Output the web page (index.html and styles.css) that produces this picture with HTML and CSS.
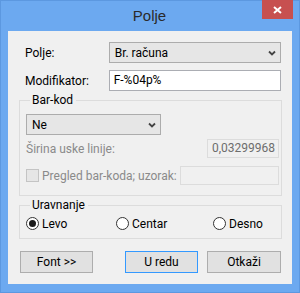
FILE: index.html
```html
<!DOCTYPE html>
<html lang="sr">
<head>
    <meta charset="UTF-8">
    <meta name="viewport" content="width=device-width, initial-scale=1.0">
    <title>Polje</title>
    <link rel="stylesheet" href="styles.css">
</head>
<body>
    <div class="window">
        <div class="titlebar">
            <span></span>
            <span class="title">Polje</span>
            <span class="close-btn">
                <svg width="9" height="8" viewBox="0 0 9 8">
                    <path d="M1 1 L8 7 M8 1 L1 7" stroke="#fff" stroke-width="2" fill="none"/>
                </svg>
            </span>
        </div>

        <div class="client">
            <div class="form-row">
                <label class="form-label">Polje:</label>
                <div class="combo combo-wide">
                    <span>Br. računa</span>
                    <svg class="chevron" width="8" height="6" viewBox="0 0 8 6">
                        <path d="M1 1.5 L4 4.5 L7 1.5" stroke="#444" stroke-width="1.8" fill="none"/>
                    </svg>
                </div>
            </div>
            <div class="form-row row-second">
                <label class="form-label">Modifikator:</label>
                <div class="textbox textbox-wide">F-%04p%</div>
            </div>

            <fieldset class="group group-barcode">
                <legend>Bar-kod</legend>
                <div class="combo combo-short">
                    <span>Ne</span>
                    <svg class="chevron" width="8" height="6" viewBox="0 0 8 6">
                        <path d="M1 1.5 L4 4.5 L7 1.5" stroke="#444" stroke-width="1.8" fill="none"/>
                    </svg>
                </div>
                <div class="group-row row-width">
                    <span class="muted">Širina uske linije:</span>
                    <div class="textbox textbox-disabled textbox-num">0,03299968</div>
                </div>
                <div class="group-row row-preview">
                    <span class="checkbox"></span>
                    <span class="muted">Pregled bar-koda; uzorak:</span>
                    <div class="textbox textbox-disabled textbox-sample"></div>
                </div>
            </fieldset>

            <fieldset class="group group-align">
                <legend>Uravnanje</legend>
                <div class="radios">
                    <span class="radio-item radio-left"><span class="radio checked"></span>Levo</span>
                    <span class="radio-item radio-center"><span class="radio"></span>Centar</span>
                    <span class="radio-item"><span class="radio"></span>Desno</span>
                </div>
            </fieldset>

            <div class="buttons">
                <button class="btn btn-font">Font &gt;&gt;</button>
                <button class="btn btn-default">U redu</button>
                <button class="btn btn-cancel">Otkaži</button>
            </div>
        </div>
    </div>
</body>
</html>
```

FILE: styles.css
```css
* {
    margin: 0;
    padding: 0;
    box-sizing: border-box;
}

body {
    font-family: Roboto, "Liberation Sans", sans-serif;
    font-size: 12px;
    color: #000;
    width: 300px;
    height: 293px;
    overflow: hidden;
}

.window {
    width: 300px;
    height: 293px;
    background: #6ca9f0;
    border: 1px solid #5c98e0;
    padding: 0 7px 8px 7px;
    display: flex;
    flex-direction: column;
}

.titlebar {
    height: 30px;
    display: grid;
    grid-template-columns: 1fr auto 1fr;
    margin-right: -1px;
}

.title {
    font-family: "Liberation Sans", sans-serif;
    font-weight: 400;
    font-size: 15px;
    color: #2a2a2a;
    line-height: 30px;
    padding-right: 2px;
}

.close-btn {
    justify-self: end;
    width: 31px;
    height: 19px;
    margin-top: -1px;
    background: #c75050;
    display: flex;
    align-items: center;
    justify-content: center;
}

.client {
    flex: 1;
    background: #f0f0f0;
    padding: 11px 11px 0 11px;
    display: flex;
    flex-direction: column;
    white-space: nowrap;
}

.form-row {
    display: flex;
    align-items: center;
    height: 21px;
}

.row-second {
    margin-top: 7px;
}

.form-label {
    width: 90px;
    padding-left: 6px;
}

.combo {
    height: 21px;
    background: #e6e6e6;
    border: 1px solid #acacac;
    display: flex;
    align-items: center;
    justify-content: space-between;
    padding: 0 4px 0 5px;
}

.combo-wide {
    width: 173px;
}

.combo-short {
    width: 135px;
}

.chevron {
    display: block;
}

.textbox {
    height: 21px;
    background: #fff;
    border: 1px solid #abadb3;
    padding: 0 4px;
    line-height: 19px;
}

.textbox-wide {
    width: 173px;
}

.textbox-disabled {
    height: 19px;
    line-height: 17px;
    background: #f0f0f0;
    border: 1px solid #dcdcdc;
    color: #6d6d6d;
}

.textbox-num {
    width: 72px;
    margin-left: auto;
}

.textbox-sample {
    width: 99px;
    margin-left: auto;
}

.group {
    border: 1px solid #dcdcdc;
    width: 263px;
    padding: 0 2px 0 6px;
}

.group legend {
    margin-left: 4px;
    padding: 0 3px 0 2px;
    line-height: 15px;
}

.group-barcode {
    margin-top: 2px;
    padding-top: 6px;
    padding-bottom: 10px;
}

.group-row {
    display: flex;
    align-items: center;
}

.row-width {
    margin-top: 4px;
}

.row-preview {
    margin-top: 8px;
}

.muted {
    color: #8a8a8a;
}

.checkbox {
    width: 13px;
    height: 13px;
    border: 1px solid #c4c4c4;
    background: #e6e6e6;
    margin-right: 3px;
}

.group-align {
    margin-top: 2px;
    padding-top: 3px;
    padding-bottom: 7px;
}

.radios {
    display: flex;
    align-items: center;
    height: 15px;
}

.radio-item {
    display: flex;
    align-items: center;
}

.radio-left {
    width: 90px;
}

.radio-center {
    width: 97px;
}

.radio {
    width: 13px;
    height: 13px;
    border: 1px solid #333;
    border-radius: 50%;
    background: #fff;
    margin-right: 3px;
    display: flex;
    align-items: center;
    justify-content: center;
}

.radio.checked::after {
    content: "";
    width: 7px;
    height: 7px;
    border-radius: 50%;
    background: #1a1a1a;
}

.buttons {
    display: flex;
    margin-top: 12px;
    padding-left: 1px;
}

.btn {
    font-family: inherit;
    font-size: 12px;
    color: #000;
    height: 22px;
    width: 73px;
    background: #e1e1e1;
    border: 1px solid #adadad;
}

.btn-default {
    margin-left: auto;
    border-color: #3399ff;
}

.btn-cancel {
    width: 74px;
    margin-left: 9px;
}
```
